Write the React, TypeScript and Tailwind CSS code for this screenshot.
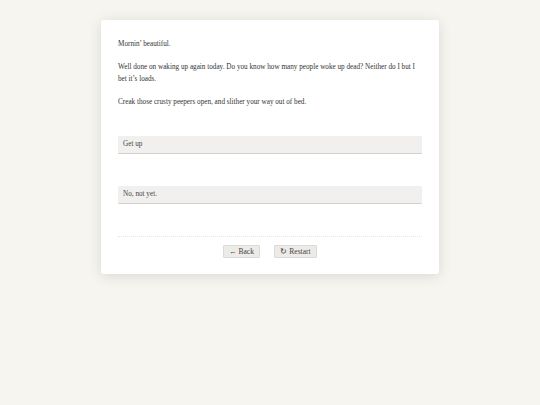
export default function App() {
  return (
    <div className="min-h-[405px] w-full bg-[#f6f5ef] pt-5" style={{ fontFamily: '"Liberation Serif", Georgia, serif' }}>
      <div className="mx-auto w-[338px] rounded-[3px] bg-white px-[17px] pt-[18px] pb-4 text-[7.2px] leading-[12px] text-[#333] shadow-[0_2px_14px_rgba(0,0,0,0.12)]">
        <p>Mornin’ beautiful.</p>
        <p className="mt-[11px]">
          Well done on waking up again today. Do you know how many people woke up dead? Neither do I but I bet it’s loads.
        </p>
        <p className="mt-[11px]">Creak those crusty peepers open, and slither your way out of bed.</p>

        <div className="mt-[28px] flex flex-col gap-[32px]">
          <div className="h-[18px] rounded-[1px] border-b border-[#d3d0cc] bg-[#f1f0ee] px-[5px] leading-[17px] text-[#444]">
            Get up
          </div>
          <div className="h-[18px] rounded-[1px] border-b border-[#d3d0cc] bg-[#f1f0ee] px-[5px] leading-[17px] text-[#444]">
            No, not yet.
          </div>
        </div>

        <div className="mt-[32px] border-t border-dotted border-[#e8e6e2]" />

        <div className="mt-2 flex justify-center gap-[14px]">
          <button className="h-[13px] w-[37px] rounded-[1px] border border-[#dcdad6] bg-[#ecebe8] text-[7.5px] leading-[11px] text-[#444]">
            ← Back
          </button>
          <button className="h-[13px] w-[43px] rounded-[1px] border border-[#dcdad6] bg-[#ecebe8] text-[7.5px] leading-[11px] text-[#444]">
            ↻ Restart
          </button>
        </div>
      </div>
    </div>
  );
}
